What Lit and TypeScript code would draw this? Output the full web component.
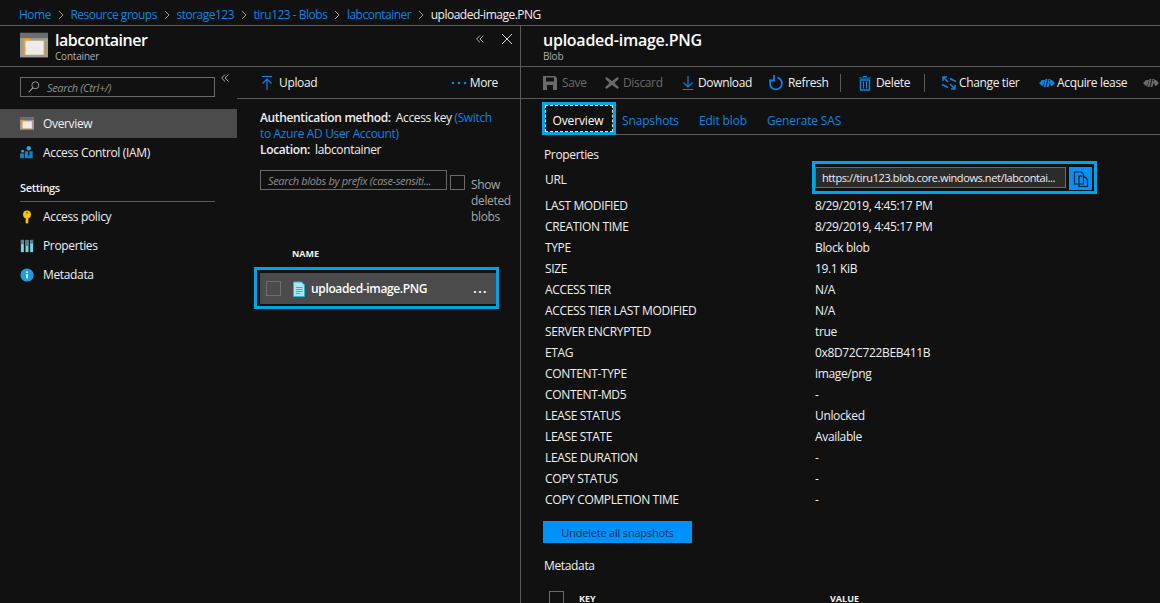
import { html, css, LitElement, svg } from "lit";
import { customElement } from "lit/decorators.js";

const icons: Record<string, unknown> = {
  container: svg`<rect x="0" y="0.500" width="16" height="14" fill="#9c9c9c"/><rect x="0" y="0.500" width="16" height="3" fill="#6e6e6e"/><path d="M2 3.500h3l1 1.500h8v8H2z" fill="#f59a23"/><rect x="3" y="5" width="10.500" height="8" fill="#ececec"/>`,
  search: svg`<circle cx="9.500" cy="6" r="4" fill="none" stroke="#aaa" stroke-width="1"/><path d="M6.500 9 2 14" stroke="#aaa" stroke-width="1.200"/>`,
  iam: svg`<circle cx="10" cy="2.500" r="2.500" fill="#2aa5dc"/><path d="M5.500 6h9v8h-9z" fill="#0f82c4"/><circle cx="3" cy="6" r="1.600" fill="#2aa5dc"/><path d="M0 8.500h4.500V14H0z" fill="#0f82c4"/><path d="M9 6h2l-.5 5h-1z" fill="#111"/>`,
  key: svg`<circle cx="8" cy="5" r="4.500" fill="#f8c400"/><path d="M6.500 8h3v6l-1.500 2-1.500-2z" fill="#f8c400"/><circle cx="8" cy="3" r="1.100" fill="#8a6d00"/>`,
  props: svg`<rect x="1" y="1" width="3.400" height="14" fill="#76d5ea"/><rect x="6.300" y="1" width="3.400" height="14" fill="#76d5ea"/><rect x="11.600" y="1" width="3.400" height="14" fill="#76d5ea"/><path d="M1 1h3.400v5H1zM6.300 1h3.400v7H6.300zM11.600 1H15v4h-3.400z" fill="#5a7f94"/>`,
  info: svg`<circle cx="8" cy="8" r="7.500" fill="#1aa0e0"/><path d="M7 7h2v5H7z" fill="#fff"/><circle cx="8" cy="4.800" r="1.100" fill="#fff"/>`,
  file: svg`<path d="M2.500 1h8l3 3v11.500h-11z" fill="#a9e6f2" stroke="#2bb3d6"/><path d="M5 6.500h6.500M5 8.500h6.500M5 10.500h6.500M5 12.500h4" stroke="#2bb3d6"/>`,
  upload: svg`<path d="M3 1.500h10M8 15V4M3.500 8.500 8 4l4.500 4.500" fill="none" stroke="#0a84e0" stroke-width="1.200"/>`,
  download: svg`<path d="M2.500 14.500h11M8 1v11M3.500 7.500 8 12l4.500-4.500" fill="none" stroke="#0a84e0" stroke-width="1.200"/>`,
  save: svg`<path d="M1 1h12l2 2v12H1z" fill="#6a6a6a"/><rect x="4" y="2.500" width="8" height="4" fill="#111"/><rect x="5" y="10" width="6" height="5" fill="#111"/>`,
  discard: svg`<path d="M2.500 2 8 6l5.500-4 1.500 1.500L10.500 8l4.500 4.500-1.500 1.500L8 10l-5.500 4L1 12.500 5.500 8 1 3.500z" fill="#6a6a6a"/>`,
  refresh: svg`<path d="M9.500 2.600A6 6 0 1 1 3 5" fill="none" stroke="#0a84e0" stroke-width="1.800"/><path d="M6 0v5.500h-5" fill="none" stroke="#0a84e0" stroke-width="1.800"/>`,
  trash: svg`<path d="M3.500 5h9v10h-9z" fill="none" stroke="#0a84e0" stroke-width="1.400"/><path d="M2 3h12M6 1.500h4M6.500 6.500v7M9.500 6.500v7" stroke="#0a84e0" stroke-width="1.200"/>`,
  tier: svg`<path d="M2 6V2h4M2 2l5 5M1 9.500l6 3M14 10v4h-4M14 14 9 9M15 6.500l-6-3" fill="none" stroke="#0a84e0" stroke-width="1.500"/>`,
  lease: svg`<path d="M0 8l3-3h3l-2 6H3zM16 8l-3-3h-3l2 6h1zM6.500 4h2l-2 8h-2zM9.500 4h2l-2 8h-2z" fill="#0a84e0"/>`,
  leaseOff: svg`<path d="M0 8l3-3h3l-2 6H3zM16 8l-3-3h-3l2 6h1zM6.500 4h2l-2 8h-2zM9.500 4h2l-2 8h-2z" fill="#6a6a6a"/>`,
  copy: svg`<path d="M1.500 1h7l2 2v10h-9zM6 5h5l3.500 3.500V15.500H6z" fill="#0091fa" stroke="#062036" stroke-width="1.200"/>`,
  dchev: svg`<path d="M7 2 3 6l4 4M11 2 7 6l4 4" fill="none" stroke="#c8c8c8"/>`,
  close: svg`<path d="M1 1l10 10M11 1 1 11" stroke="#d8d8d8" stroke-width="1"/>`,
  dots: svg`<circle cx="2" cy="8" r="1.300" fill="#0a84e0"/><circle cx="8" cy="8" r="1.300" fill="#0a84e0"/><circle cx="14" cy="8" r="1.300" fill="#0a84e0"/>`,
};

const icon = (name: string, size = 16, vb = "0 0 16 16") =>
  html`<svg width=${size} height=${size} viewBox=${vb}>${icons[name]}</svg>`;

const crumbs = ["Home", "Resource groups", "storage123", "tiru123 - Blobs", "labcontainer"];

const nav = [
  { label: "Access policy", icon: "key" },
  { label: "Properties", icon: "props" },
  { label: "Metadata", icon: "info" },
];

const commands = [
  { label: "Save", icon: "save", off: true, w: 62, g: 4 },
  { label: "Discard", icon: "discard", off: true, w: 76, g: 3 },
  { label: "Download", icon: "download", w: 88, g: 2 },
  { label: "Refresh", icon: "refresh", w: 72, g: 4 },
  { sep: true },
  { label: "Delete", icon: "trash", w: 67, g: 3 },
  { sep: true },
  { label: "Change tier", icon: "tier", w: 98, g: 2 },
  { label: "Acquire lease", icon: "lease", w: 104, g: 2 },
  { label: "", icon: "leaseOff", off: true, w: 20, g: 0 },
];

const props = [
  ["LAST MODIFIED", "8/29/2019, 4:45:17 PM"],
  ["CREATION TIME", "8/29/2019, 4:45:17 PM"],
  ["TYPE", "Block blob"],
  ["SIZE", "19.1 KiB"],
  ["ACCESS TIER", "N/A"],
  ["ACCESS TIER LAST MODIFIED", "N/A"],
  ["SERVER ENCRYPTED", "true"],
  ["ETAG", "0x8D72C722BEB411B"],
  ["CONTENT-TYPE", "image/png"],
  ["CONTENT-MD5", "-"],
  ["LEASE STATUS", "Unlocked"],
  ["LEASE STATE", "Available"],
  ["LEASE DURATION", "-"],
  ["COPY STATUS", "-"],
  ["COPY COMPLETION TIME", "-"],
];

@customElement("app-root")
class AppRoot extends LitElement {
  static styles = css`
    :host {
      display: block;
      width: 1160px;
      height: 603px;
      overflow: hidden;
      background: #111;
      color: #f0f0f0;
      font-family: "Open Sans", "Noto Sans", sans-serif;
      font-size: 12px;
      letter-spacing: -0.35px;
    }
    a {
      color: #0a84e0;
    }
    svg {
      display: block;
      flex: none;
    }
    .crumbs {
      height: 26px;
      box-sizing: border-box;
      padding: 4px 0 0 19px;
      display: flex;
      align-items: center;
      border-bottom: 1px solid #5a5a5a;
      color: #0a84e0;
      letter-spacing: -0.5px;
    }
    .crumbs .sep {
      width: 19.5px;
      display: flex;
      justify-content: center;
    }
    .crumbs .current {
      color: #f0f0f0;
    }
    .blades {
      display: flex;
      height: 577px;
    }
    .left {
      width: 520px;
      flex: none;
      border-right: 1px solid #5a5a5a;
      display: flex;
      flex-direction: column;
    }
    .right {
      flex: 1;
      min-width: 0;
    }
    .head {
      height: 41px;
      box-sizing: border-box;
      border-bottom: 1px solid #5a5a5a;
      display: flex;
      align-items: center;
    }
    .head h1 {
      margin: 0;
      font-size: 16px;
      line-height: 20px;
      font-weight: 600;
      color: #fff;
      letter-spacing: -0.25px;
    }
    .left .head h1 {
      letter-spacing: -0.45px;
    }
    .head small {
      display: block;
      font-size: 10px;
      line-height: 12px;
      color: #b0b0b0;
      letter-spacing: -0.2px;
    }
    .left .head {
      padding-left: 20px;
      gap: 8px;
    }
    .left .head > svg {
      margin-right: -1px;
    }
    .head .tools {
      margin-left: auto;
      display: flex;
      align-items: center;
      gap: 15px;
      padding: 0 7px 14px 0;
    }
    .right .head {
      padding-left: 22px;
    }
    .panes {
      flex: 1;
      display: flex;
      min-height: 0;
    }
    .side {
      width: 237px;
      flex: none;
    }
    .side-search {
      display: flex;
      align-items: flex-start;
      padding: 10px 0 0 20px;
      height: 42px;
      box-sizing: border-box;
    }
    .searchbox {
      width: 195px;
      height: 20px;
      box-sizing: border-box;
      border: 1px solid #6a6a6a;
      display: flex;
      align-items: center;
      gap: 6px;
      padding-left: 6px;
      color: #8f8f8f;
      font-style: italic;
      font-size: 11px;
    }
    .side-search .collapse {
      margin: -5px 0 0 4px;
    }
    .nav {
      height: 29px;
      display: flex;
      align-items: center;
      gap: 9px;
      padding-left: 20px;
    }
    .nav.active {
      background: #4b4b4b;
    }
    .side h4 {
      margin: 13px 0 0 20px;
      padding-bottom: 5px;
      border-bottom: 1px solid #5a5a5a;
      font-size: 11px;
      line-height: 16px;
      font-weight: 600;
      width: 195px;
      box-sizing: border-box;
    }
    .blobs {
      flex: 1;
      min-width: 0;
    }
    .bar {
      height: 32px;
      box-sizing: border-box;
      border-bottom: 1px solid #5a5a5a;
      display: flex;
      align-items: center;
    }
    .blobs .bar {
      padding: 0 22px;
      justify-content: space-between;
    }
    .cmd {
      display: flex;
      align-items: center;
      gap: 3px;
      white-space: nowrap;
    }
    .blobs .cmd:first-child {
      gap: 4px;
    }
    .cmd.off {
      color: #6a6a6a;
    }
    .auth {
      padding: 11px 23px 0;
      line-height: 16px;
      height: 50px;
    }
    .auth b {
      font-weight: 600;
      margin-right: 5px;
    }
    .filter {
      display: flex;
      padding: 10px 0 0 23px;
      height: 78px;
      gap: 3px;
    }
    .filter .searchbox {
      width: 187px;
      padding-left: 7px;
    }
    .check {
      width: 15px;
      height: 15px;
      border: 1px solid #6a6a6a;
      box-sizing: border-box;
      flex: none;
    }
    .filter .check {
      margin-top: 5px;
    }
    .filter .show {
      margin: 7px 0 0 3px;
      line-height: 16px;
      color: #a8a8a8;
      width: 46px;
    }
    .colhead {
      padding-left: 55px;
      font-size: 9px;
      font-weight: 700;
      line-height: 12px;
      letter-spacing: 0;
    }
    .hl {
      border: 3px solid #00a4e4;
      box-sizing: border-box;
    }
    .rowhl {
      margin: 7px 21px 0 17px;
      height: 42px;
      padding: 3px 0 2px 3px;
    }
    .row {
      height: 31px;
      background: #4b4b4b;
      display: flex;
      align-items: center;
      padding-left: 6px;
      font-weight: 600;
      color: #fff;
    }
    .row .check {
      border-color: #6e6e6e;
    }
    .row svg {
      margin: 0 4px 0 10px;
    }
    .row .more {
      margin-left: auto;
      padding-right: 8px;
      font-weight: 700;
      letter-spacing: 1.500px;
    }
    .right .bar {
      padding-left: 21px;
    }
    .right .cmd {
      flex: none;
    }
    .vsep {
      width: 1px;
      height: 18px;
      background: #5a5a5a;
      flex: none;
      margin: 0 16px 0 0;
    }
    .tabs {
      height: 36px;
      box-sizing: border-box;
      display: flex;
      align-items: flex-start;
      padding-left: 21px;
    }
    .tabs-line {
      flex: 1;
      height: 100%;
      box-sizing: border-box;
      border-bottom: 1px solid #5a5a5a;
      display: flex;
      align-items: center;
      color: #0a84e0;
      padding: 8px 0 0 6px;
      gap: 20px;
      letter-spacing: -0.15px;
    }
    .tab-on {
      width: 74px;
      height: 33px;
      box-sizing: border-box;
      margin-top: 3px;
      color: #fff;
      letter-spacing: -0.15px;
    }
    .tab-on span {
      display: flex;
      align-items: center;
      justify-content: center;
      box-sizing: border-box;
      width: 100%;
      height: 100%;
      padding: 3px 2px 0 0;
      outline: 1px dashed #ddd;
      outline-offset: -1px;
    }
    .body {
      padding: 0 0 0 23px;
    }
    .body h3 {
      margin: 0;
      font-size: 12px;
      font-weight: 400;
      line-height: 16px;
    }
    .body > h3:first-child {
      padding-top: 12px;
    }
    .urlrow {
      display: flex;
      align-items: flex-start;
      height: 34px;
      margin-top: -2px;
      padding-left: 1px;
    }
    .prop {
      width: 267px;
      flex: none;
      line-height: 38px;
    }
    .urlbox {
      width: 285px;
      height: 33px;
      display: flex;
      padding: 3px 2px 0 0;
      gap: 3px;
    }
    .urlbox .input {
      width: 251px;
      height: 21px;
      box-sizing: border-box;
      background: #2b2b2b;
      border: 1px solid #6a6a6a;
      display: flex;
      align-items: center;
      padding-left: 6px;
      white-space: nowrap;
      overflow: hidden;
      font-size: 11px;
      letter-spacing: -0.4px;
    }
    .copy {
      width: 23px;
      height: 23px;
      background: #0091fa;
      display: flex;
      align-items: center;
      justify-content: center;
    }
    .rows {
      display: grid;
      grid-template-columns: 270px 1fr;
      grid-auto-rows: 21px;
      align-items: center;
      padding-left: 1px;
    }
    .undelete {
      margin: 11px 0 0 -1px;
      width: 149px;
      height: 22px;
      background: #0091fa;
      color: #0a3157;
      font-size: 11px;
      letter-spacing: -0.2px;
      display: flex;
      align-items: center;
      justify-content: center;
    }
    .body .meta {
      margin-top: 15px;
    }
    .metahead {
      display: flex;
      align-items: center;
      margin-top: 17px;
      padding-left: 5px;
      font-size: 9px;
      font-weight: 700;
      letter-spacing: 0;
    }
    .metahead span:nth-child(2) {
      width: 251px;
      margin-left: 15px;
    }
  `;

  render() {
    return html`
      <div class="crumbs">
        ${crumbs.map(
          (c) => html`<span>${c}</span
            ><span class="sep"
              ><svg width="6" height="10" viewBox="0 0 6 10">
                <path d="M1 1l4 4-4 4" fill="none" stroke="#9a9a9a" /></svg
            ></span>`
        )}
        <span class="current">uploaded-image.PNG</span>
      </div>
      <div class="blades">
        <div class="left">
          <div class="head">
            ${icon("container", 28)}
            <div>
              <h1>labcontainer</h1>
              <small>Container</small>
            </div>
            <div class="tools">
              ${icon("dchev", 12, "0 0 14 12")} ${icon("close", 12, "0 0 12 12")}
            </div>
          </div>
          <div class="panes">
            <div class="side">
              <div class="side-search">
                <div class="searchbox">${icon("search", 14)}<span>Search (Ctrl+/)</span></div>
                <span class="collapse">${icon("dchev", 12, "0 0 14 12")}</span>
              </div>
              <div class="nav active">${icon("container", 14)}<span>Overview</span></div>
              <div class="nav">${icon("iam", 14)}<span>Access Control (IAM)</span></div>
              <h4>Settings</h4>
              ${nav.map((n) => html`<div class="nav">${icon(n.icon, 14)}<span>${n.label}</span></div>`)}
            </div>
            <div class="blobs">
              <div class="bar">
                <div class="cmd">${icon("upload")}<span>Upload</span></div>
                <div class="cmd">${icon("dots")}<span>More</span></div>
              </div>
              <div class="auth">
                <b>Authentication method:</b>Access key
                <a>(Switch to Azure AD User Account)</a><br />
                <b>Location:</b>labcontainer
              </div>
              <div class="filter">
                <div class="searchbox">Search blobs by prefix (case-sensiti...</div>
                <div class="check"></div>
                <span class="show">Show deleted blobs</span>
              </div>
              <div class="colhead">NAME</div>
              <div class="hl rowhl">
                <div class="row">
                  <div class="check"></div>
                  ${icon("file")}
                  <span>uploaded-image.PNG</span>
                  <span class="more">...</span>
                </div>
              </div>
            </div>
          </div>
        </div>
        <div class="right">
          <div class="head">
            <div>
              <h1>uploaded-image.PNG</h1>
              <small>Blob</small>
            </div>
          </div>
          <div class="bar">
            ${commands.map((c) =>
              c.sep
                ? html`<div class="vsep"></div>`
                : html`<div class="cmd ${c.off ? "off" : ""}" style="width:${c.w}px;gap:${c.g}px">
                    ${icon(c.icon as string)}<span>${c.label}</span>
                  </div>`
            )}
          </div>
          <div class="tabs">
            <div class="hl tab-on"><span>Overview</span></div>
            <div class="tabs-line">
              <span>Snapshots</span><span>Edit blob</span><span>Generate SAS</span>
            </div>
          </div>
          <div class="body">
            <h3>Properties</h3>
            <div class="urlrow">
              <span class="prop">URL</span>
              <div class="hl urlbox">
                <div class="input">https://tiru123.blob.core.windows.net/labcontai...</div>
                <div class="copy">${icon("copy")}</div>
              </div>
            </div>
            <div class="rows">
              ${props.map(([k, v]) => html`<span>${k}</span><span>${v}</span>`)}
            </div>
            <div class="undelete">Undelete all snapshots</div>
            <h3 class="meta">Metadata</h3>
            <div class="metahead">
              <div class="check"></div>
              <span>KEY</span><span>VALUE</span>
            </div>
          </div>
        </div>
      </div>
    `;
  }
}
